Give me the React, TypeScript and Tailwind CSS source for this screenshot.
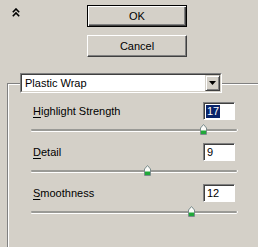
import React from 'react';

type Setting = {
  label: string;
  key: string;
  value: number;
  pos: number;
};

const settings: Setting[] = [
  { label: 'ighlight Strength', key: 'H', value: 17, pos: 169 },
  { label: 'etail', key: 'D', value: 9, pos: 113 },
  { label: 'moothness', key: 'S', value: 12, pos: 157 },
];

const Thumb = () => (
  <svg width="7" height="11" viewBox="0 0 7 11" className="block">
    <path d="M0.5 4 L3.5 0.5 L6.5 4 V10.5 H0.5 Z" fill="#fbfbf8" stroke="#7b8c8c" />
    <rect x="1" y="7" width="5" height="3" fill="#21a83a" />
    <rect x="1" y="6" width="5" height="1" fill="#8fd29a" />
  </svg>
);

const Slider = ({ pos }: { pos: number }) => (
  <div className="relative ml-[23px] mt-[4px] h-[11px] w-[206px]">
    <div className="absolute left-0 right-0 top-[5px] h-[2px] rounded-full bg-[#9a9a96] shadow-[0_1px_0_#ffffff,1px_0_0_#ffffff]" />
    <div className="absolute top-0" style={{ left: pos }}>
      <Thumb />
    </div>
  </div>
);

const Row = ({ s, first }: { s: Setting; first: boolean }) => (
  <div className="flex flex-col pb-[8px]">
    <div className="flex h-[18px] items-center">
      <span className="ml-[25px] flex-1 pt-[1px] leading-none">
        <span className="underline underline-offset-2">{s.key}</span>
        {s.label}
      </span>
      <div className="mr-[23px] flex h-[18px] w-[32px] items-center border border-t-[#808080] border-l-[#808080] border-r-white border-b-white bg-white shadow-[inset_1px_1px_0_#404040]">
        <span
          className={`ml-[2px] px-[1px] leading-[13px] ${
            first ? 'bg-[#0a246a] text-white' : 'text-black'
          }`}
        >
          {s.value}
        </span>
      </div>
    </div>
    <Slider pos={s.pos} />
  </div>
);

export default function App() {
  return (
    <div className="flex h-[247px] w-[258px] flex-col overflow-hidden bg-[#d4d0c8] font-['Liberation_Sans',Arial,sans-serif] text-[11px] text-black">
      <div className="flex pt-[5px]">
        <div className="w-[87px] pl-[12px] pt-[3px]">
          <svg width="8" height="9" viewBox="0 0 8 9" className="block">
            <path d="M0.8 4.2 L4 1 L7.2 4.2" fill="none" stroke="#000" strokeWidth="1.6" />
            <path d="M0.8 8.2 L4 5 L7.2 8.2" fill="none" stroke="#000" strokeWidth="1.6" />
          </svg>
        </div>
        <div className="flex w-[100px] flex-col gap-[8px]">
          <button className="flex h-[22px] items-center justify-center border border-black bg-[#d4d0c8] shadow-[inset_1px_1px_0_#ffffff,inset_-1px_-1px_0_#404040,inset_-2px_-2px_0_#808080]">
            OK
          </button>
          <button className="flex h-[22px] items-center justify-center border border-t-white border-l-white border-r-[#404040] border-b-[#404040] bg-[#d4d0c8] shadow-[inset_-1px_-1px_0_#808080]">
            Cancel
          </button>
        </div>
      </div>

      {/* group box with the filter picker sitting on its top edge */}
      <div className="ml-[7px] mt-[26px] flex flex-1 flex-col border-l border-t border-[#808080] shadow-[inset_1px_1px_0_#ffffff]">
        <div className="ml-[12px] -mt-[11px] flex h-[20px] w-[202px] border border-t-[#808080] border-l-[#808080] border-r-white border-b-white bg-[#d4d0c8]">
          <div className="flex flex-1 border border-t-[#404040] border-l-[#404040] border-r-[#d4d0c8] border-b-[#d4d0c8]">
            <div className="flex flex-1 items-center bg-white pl-[3px]">Plastic Wrap</div>
            <div className="flex w-[15px] items-center justify-center border border-t-[#d4d0c8] border-l-[#d4d0c8] border-r-[#404040] border-b-[#404040] bg-[#d4d0c8] shadow-[inset_1px_1px_0_#ffffff,inset_-1px_-1px_0_#808080]">
              <svg width="7" height="4" viewBox="0 0 7 4" className="block">
                <path d="M0 0 H7 L3.5 4 Z" fill="#000" />
              </svg>
            </div>
          </div>
        </div>

        <div className="mt-[9px] flex flex-col">
          {settings.map((s, i) => (
            <Row key={s.key} s={s} first={i === 0} />
          ))}
        </div>
      </div>
    </div>
  );
}
